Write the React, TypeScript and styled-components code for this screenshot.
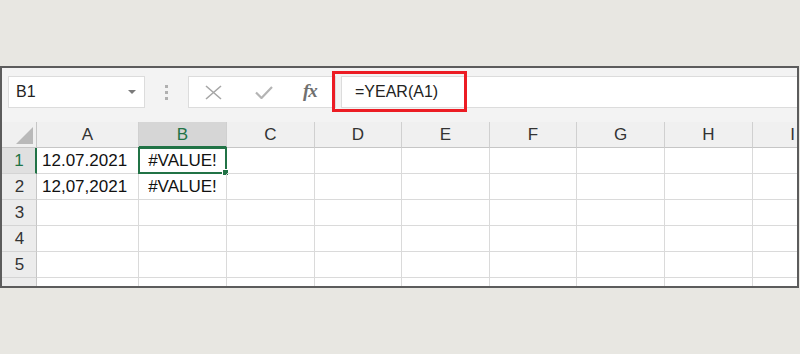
import React from "react";
import styled, { createGlobalStyle } from "styled-components";

const Global = createGlobalStyle`
  html, body { margin: 0; padding: 0; }
  body {
    background: #e8e7e2;
    font-family: "Liberation Sans", Arial, sans-serif;
    width: 800px;
    height: 354px;
    overflow: hidden;
  }
`;

const Page = styled.div`
  padding-top: 66px;
`;

const Window = styled.div`
  width: 799px;
  box-sizing: border-box;
  border: 2px solid #5c5c5c;
  background: #ffffff;
  overflow: hidden;
`;

const Toolbar = styled.div`
  height: 54px;
  box-sizing: border-box;
  background: #f3f3f3;
  display: flex;
  align-items: flex-start;
  padding: 8px 0 0 6px;
`;

const NameBox = styled.div`
  width: 137px;
  height: 32px;
  box-sizing: border-box;
  background: #fff;
  border: 1px solid #dcdcdc;
  display: flex;
  align-items: center;
  justify-content: space-between;
  padding: 0 8px 0 7px;
  font-size: 16px;
  color: #222;
`;

const Grip = styled.div`
  width: 43px;
  height: 32px;
  display: flex;
  flex-direction: column;
  align-items: center;
  justify-content: center;
  gap: 3px;
`;

const Dot = styled.span`
  width: 3px;
  height: 3px;
  background: #b0b0b0;
`;

const ButtonsBox = styled.div`
  width: 148px;
  height: 32px;
  box-sizing: border-box;
  background: #fff;
  border: 1px solid #dcdcdc;
  display: flex;
  align-items: center;
  padding-left: 16px;
`;

const IconSlot = styled.div<{ $w: number }>`
  width: ${(p) => p.$w}px;
  height: 30px;
  display: flex;
  align-items: center;
`;

const Fx = styled.span`
  font-family: "Liberation Serif", "Times New Roman", serif;
  font-style: italic;
  font-weight: bold;
  font-size: 19px;
  color: #707070;
  letter-spacing: -1px;
  margin-top: -2px;
`;

const FormulaWrap = styled.div`
  position: relative;
  flex: 1;
  margin-left: 5px;
`;

const FormulaInput = styled.div`
  height: 32px;
  box-sizing: border-box;
  background: #fff;
  border-top: 1px solid #dcdcdc;
  border-bottom: 1px solid #dcdcdc;
  border-left: 1px solid #dcdcdc;
  display: flex;
  align-items: center;
  padding-left: 13px;
  font-size: 16px;
  color: #222;
`;

const Highlight = styled.div`
  position: absolute;
  left: -9px;
  top: -5px;
  width: 135px;
  height: 41px;
  box-sizing: border-box;
  border: 3px solid #ec1c24;
  pointer-events: none;
`;

const Sheet = styled.div`
  display: grid;
  grid-template-columns: 35px 102px 88px 88px 87px 88px 87px 88px 88px 80px;
  grid-auto-rows: 26px;
  height: 164px;
  overflow: hidden;
  background: #fff;
`;

const ColHead = styled.div<{ $sel?: boolean }>`
  box-sizing: border-box;
  background: ${(p) => (p.$sel ? "#d6d6d6" : "#f0f0f0")};
  border-right: 1px solid #d0d0d0;
  border-bottom: ${(p) => (p.$sel ? "2px solid #217346" : "1px solid #c6c6c6")};
  display: flex;
  align-items: center;
  justify-content: center;
  font-size: 17px;
  color: ${(p) => (p.$sel ? "#217346" : "#333")};
  padding-top: 1px;
`;

const Corner = styled.div`
  box-sizing: border-box;
  background: #f0f0f0;
  border-right: 1px solid #c6c6c6;
  border-bottom: 1px solid #c6c6c6;
  display: flex;
  align-items: flex-end;
  justify-content: flex-end;
  padding: 0 3px 3px 0;
`;

const RowHead = styled.div<{ $sel?: boolean }>`
  box-sizing: border-box;
  background: ${(p) => (p.$sel ? "#e0e0e0" : "#ececec")};
  border-right: ${(p) => (p.$sel ? "2px solid #217346" : "1px solid #c6c6c6")};
  border-bottom: 1px solid #d4d4d4;
  display: flex;
  align-items: center;
  justify-content: center;
  font-size: 17px;
  color: ${(p) => (p.$sel ? "#217346" : "#333")};
  padding-left: 1px;
`;

const Cell = styled.div<{ $center?: boolean }>`
  position: relative;
  box-sizing: border-box;
  border-right: 1px solid #dadada;
  border-bottom: 1px solid #dadada;
  display: flex;
  align-items: center;
  justify-content: ${(p) => (p.$center ? "center" : "flex-start")};
  padding-left: ${(p) => (p.$center ? "0" : "5px")};
  font-size: 17px;
  color: #111;
  white-space: nowrap;
`;

const ActiveFrame = styled.div`
  position: absolute;
  left: -1px;
  top: -1px;
  right: -1px;
  bottom: -1px;
  border: 2px solid #217346;
  pointer-events: none;
`;

const Handle = styled.div`
  position: absolute;
  right: -4px;
  bottom: -4px;
  width: 5px;
  height: 5px;
  background: #217346;
  border: 1px solid #fff;
`;

const cols = ["A", "B", "C", "D", "E", "F", "G", "H", "I"];
const data: Record<number, string[]> = {
  1: ["12.07.2021", "#VALUE!"],
  2: ["12,07,2021", "#VALUE!"],
};

export default function App() {
  const rows = [1, 2, 3, 4, 5, 6];
  return (
    <>
      <Global />
      <Page>
        <Window>
          <Toolbar>
            <NameBox>
              <span>B1</span>
              <svg width="8" height="5" viewBox="0 0 8 5">
                <polygon points="0,0 8,0 4,4" fill="#7a7a7a" />
              </svg>
            </NameBox>
            <Grip>
              <Dot />
              <Dot />
              <Dot />
            </Grip>
            <ButtonsBox>
              <IconSlot $w={50}>
                <svg width="17" height="15" viewBox="0 0 17 15">
                  <path d="M1 1 L16 14 M16 1 L1 14" stroke="#a6a6a6" strokeWidth="1.6" fill="none" />
                </svg>
              </IconSlot>
              <IconSlot $w={48}>
                <svg width="18" height="13" viewBox="0 0 18 13">
                  <path d="M1 6.5 L6.5 12 L17 1" stroke="#b4b4b4" strokeWidth="2.2" fill="none" />
                </svg>
              </IconSlot>
              <IconSlot $w={30}>
                <Fx>fx</Fx>
              </IconSlot>
            </ButtonsBox>
            <FormulaWrap>
              <FormulaInput>=YEAR(A1)</FormulaInput>
              <Highlight />
            </FormulaWrap>
          </Toolbar>
          <Sheet>
            <Corner>
              <svg width="17" height="17" viewBox="0 0 17 17">
                <polygon points="17,0 17,17 0,17" fill="#b9b9b9" />
              </svg>
            </Corner>
            {cols.map((c) => (
              <ColHead key={c} $sel={c === "B"}>
                {c}
              </ColHead>
            ))}
            {rows.map((r) => (
              <React.Fragment key={r}>
                <RowHead $sel={r === 1}>{r <= 5 ? r : ""}</RowHead>
                {cols.map((c, i) => {
                  const v = data[r]?.[i] ?? "";
                  const active = r === 1 && c === "B";
                  return (
                    <Cell key={c} $center={c === "B"}>
                      {v}
                      {active && (
                        <ActiveFrame>
                          <Handle />
                        </ActiveFrame>
                      )}
                    </Cell>
                  );
                })}
              </React.Fragment>
            ))}
          </Sheet>
        </Window>
      </Page>
    </>
  );
}
